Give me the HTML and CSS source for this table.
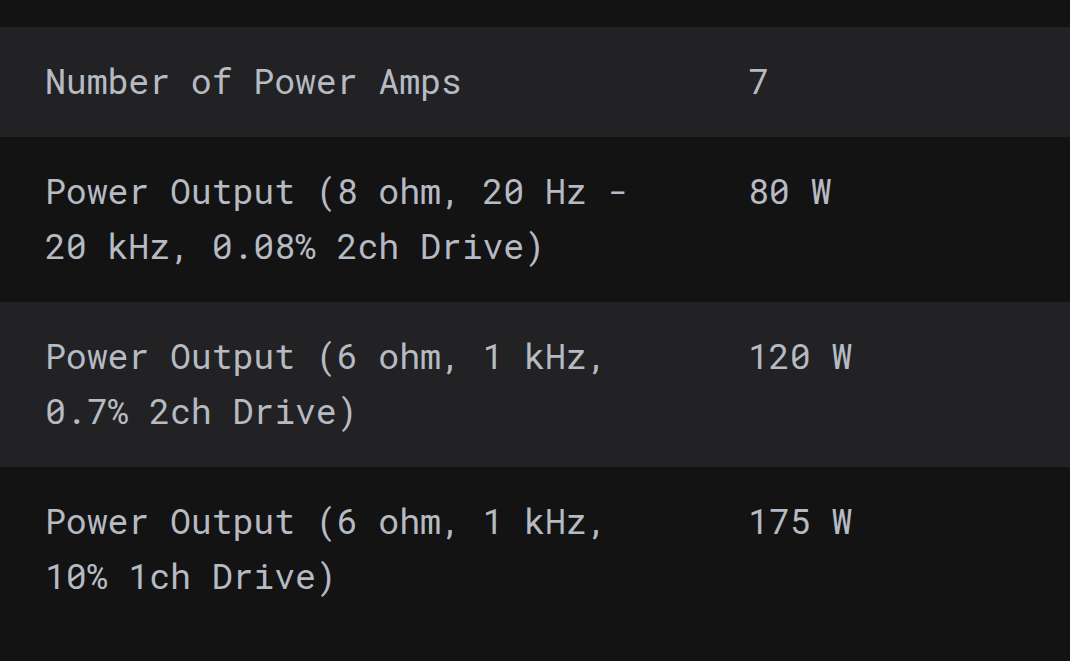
FILE: index.html
```html
<!DOCTYPE html>
<html lang="en">
<head>
<meta charset="utf-8">
<title>Specifications</title>
<link rel="stylesheet" href="styles.css">
</head>
<body>
<div class="specs">
  <div class="row alt">
    <div class="label">Number of Power Amps</div>
    <div class="value">7</div>
  </div>
  <div class="row">
    <div class="label">Power Output (8 ohm, 20 Hz - 20 kHz, 0.08% 2ch Drive)</div>
    <div class="value">80 W</div>
  </div>
  <div class="row alt">
    <div class="label">Power Output (6 ohm, 1 kHz, 0.7% 2ch Drive)</div>
    <div class="value">120 W</div>
  </div>
  <div class="row">
    <div class="label">Power Output (6 ohm, 1 kHz, 10% 1ch Drive)</div>
    <div class="value">175 W</div>
  </div>
</div>
</body>
</html>
```
FILE: styles.css
```css
html, body {
  margin: 0;
  padding: 0;
  background: #131314;
}
body {
  font-family: "Roboto Mono", "DejaVu Sans Mono", "Liberation Mono", monospace;
  font-size: 35px;
  letter-spacing: -0.17px;
  line-height: 55px;
  color: #b6bac2;
  overflow: hidden;
}
.specs {
  padding-top: 27px;
}
.row {
  display: flex;
  padding: 25.5px 0 29.5px;
}
.row.alt {
  background: #222224;
}
.label {
  box-sizing: border-box;
  width: 748px;
  padding-left: 45px;
  padding-right: 80px;
  flex: none;
}
.value {
  flex: 1;
}
```
